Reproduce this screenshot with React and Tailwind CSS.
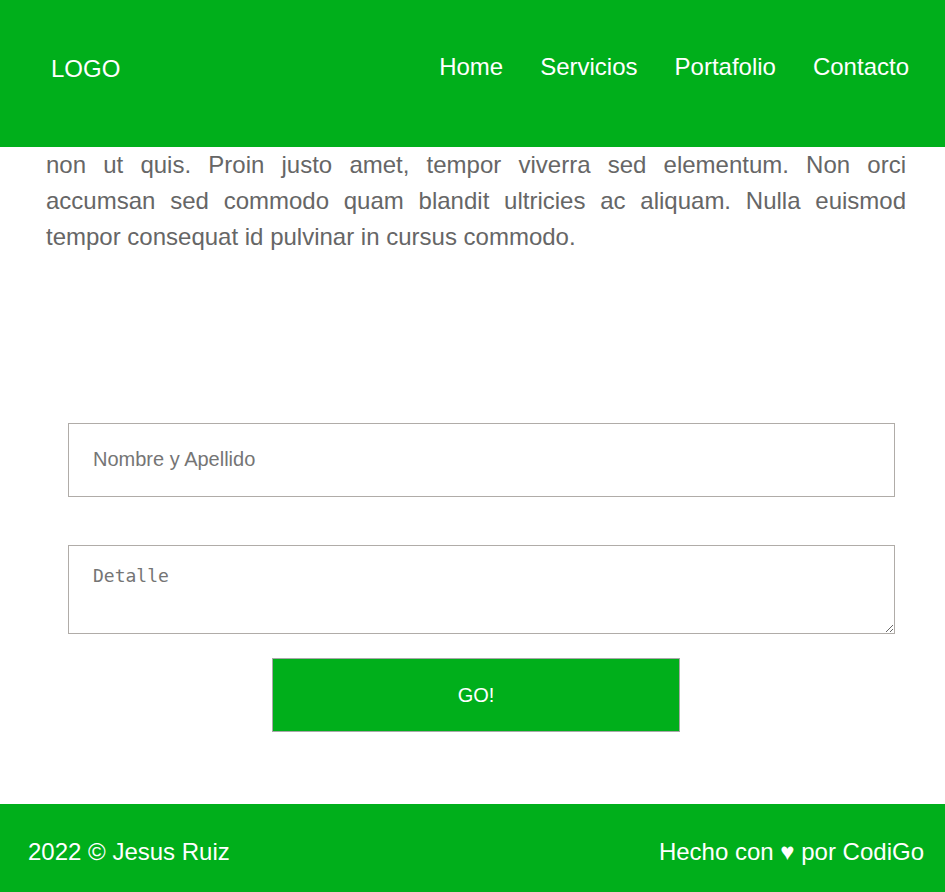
import React from "react";

const links = ["Home", "Servicios", "Portafolio", "Contacto"];

export default function App() {
  return (
    <div className="min-h-screen bg-white font-['Liberation_Sans',Arial,sans-serif]">
      <header className="h-[147px] bg-[#00af1b] flex items-start justify-between pt-[49px] pl-[51px] pr-[36px] text-white text-[24px]">
        <div className="mt-[2px]">LOGO</div>
        <nav className="flex gap-[37px]">
          {links.map((l) => (
            <a key={l} href="#" className="text-white">
              {l}
            </a>
          ))}
        </nav>
      </header>

      <main>
        <div className="pl-[46px] pr-[39px] text-[24px] leading-[36px] text-[#666666]">
          <p className="text-justify [text-align-last:justify]">
            non ut quis. Proin justo amet, tempor viverra sed elementum. Non orci
          </p>
          <p className="text-justify [text-align-last:justify]">
            accumsan sed commodo quam blandit ultricies ac aliquam. Nulla euismod
          </p>
          <p>tempor consequat id pulvinar in cursus commodo.</p>
        </div>

        <form className="mt-[168px] ml-[68px] mr-[50px] flex flex-col">
          <input
            type="text"
            placeholder="Nombre y Apellido"
            className="h-[74px] border border-[#b0aca8] px-[24px] pb-[2px] text-[20px] placeholder:text-[#757575] outline-none"
          />
          <textarea
            placeholder="Detalle"
            className="mt-[48px] h-[89px] border border-[#b0aca8] px-[24px] pt-[16px] font-['DejaVu_Sans_Mono',monospace] text-[18px] placeholder:text-[#757575] outline-none"
          />
          <button
            type="button"
            className="mt-[24px] ml-[204px] w-[408px] h-[74px] bg-[#00af1b] border border-[#a8a8a8] text-white text-[20px]"
          >
            GO!
          </button>
        </form>
      </main>

      <footer className="mt-[72px] h-[88px] bg-[#00af1b] flex items-center justify-between pt-[8px] pl-[28px] pr-[21px] text-white text-[24px]">
        <span>2022 © Jesus Ruiz</span>
        <span>Hecho con ♥ por CodiGo</span>
      </footer>
    </div>
  );
}
